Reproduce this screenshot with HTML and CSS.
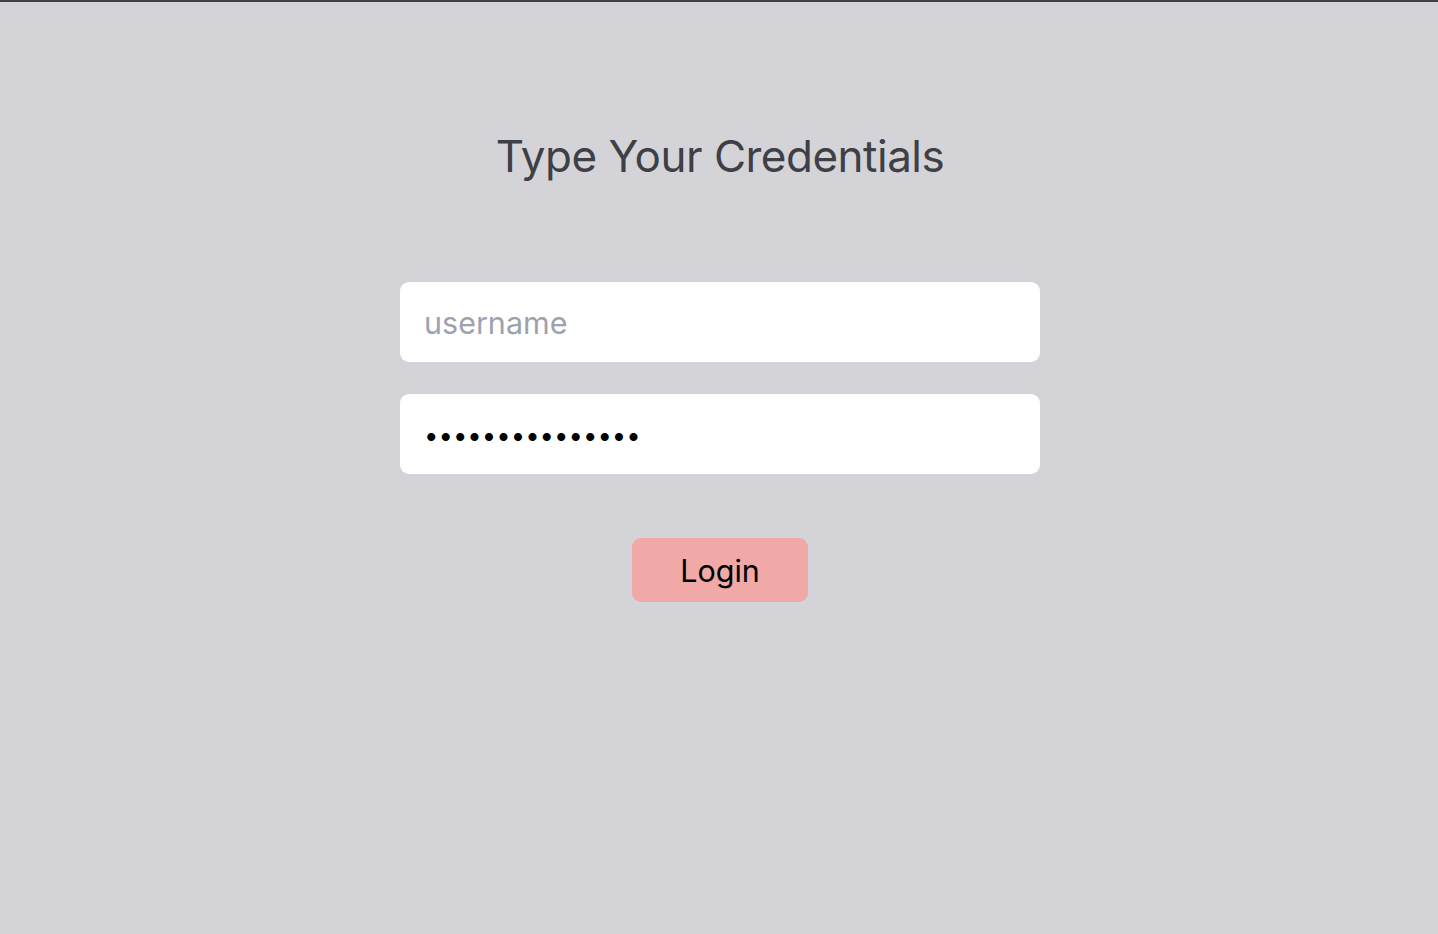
FILE: index.html
```html
<!DOCTYPE html>
<html>
<head>
<meta charset="utf-8">
<link rel="stylesheet" href="styles.css">
</head>
<body>
<main class="page">
  <h1 class="title">Type Your Credentials</h1>
  <form class="form">
    <input class="field" type="text" placeholder="username">
    <input class="field field-password" type="password" value="passwordpasswor">
    <button class="btn" type="button">Login</button>
  </form>
</main>
</body>
</html>
```

FILE: styles.css
```css
html, body {
  margin: 0;
  padding: 0;
  height: 100%;
}
body {
  background: #d4d4d8;
  border-top: 2px solid #3f3f46;
  box-sizing: border-box;
  font-family: Inter, "Noto Sans", sans-serif;
}
.page {
  display: flex;
  flex-direction: column;
  align-items: center;
  padding-top: 126px;
  padding-left: 2px;
}
.title {
  margin: 0;
  font-size: 44px;
  font-weight: 400;
  line-height: 56px;
  color: #3f3f46;
  letter-spacing: -0.5px;
}
.form {
  display: flex;
  flex-direction: column;
  align-items: center;
  margin-top: 98px;
  gap: 32px;
}
.field {
  box-sizing: border-box;
  width: 640px;
  height: 80px;
  border: none;
  border-radius: 9px;
  background: #fff;
  padding: 0 24px;
  font-family: Inter, "Noto Sans", sans-serif;
  font-size: 30.5px;
  color: #000;
  outline: none;
}
.field::placeholder {
  color: #9ca3af;
}
.field-password {
  font-size: 25.7px;
}
.btn {
  margin-top: 32px;
  width: 176px;
  height: 64px;
  border: none;
  border-radius: 9px;
  background: #f0a9a7;
  color: #000;
  font-family: Inter, "Noto Sans", sans-serif;
  font-size: 30.5px;
  cursor: pointer;
}
```
